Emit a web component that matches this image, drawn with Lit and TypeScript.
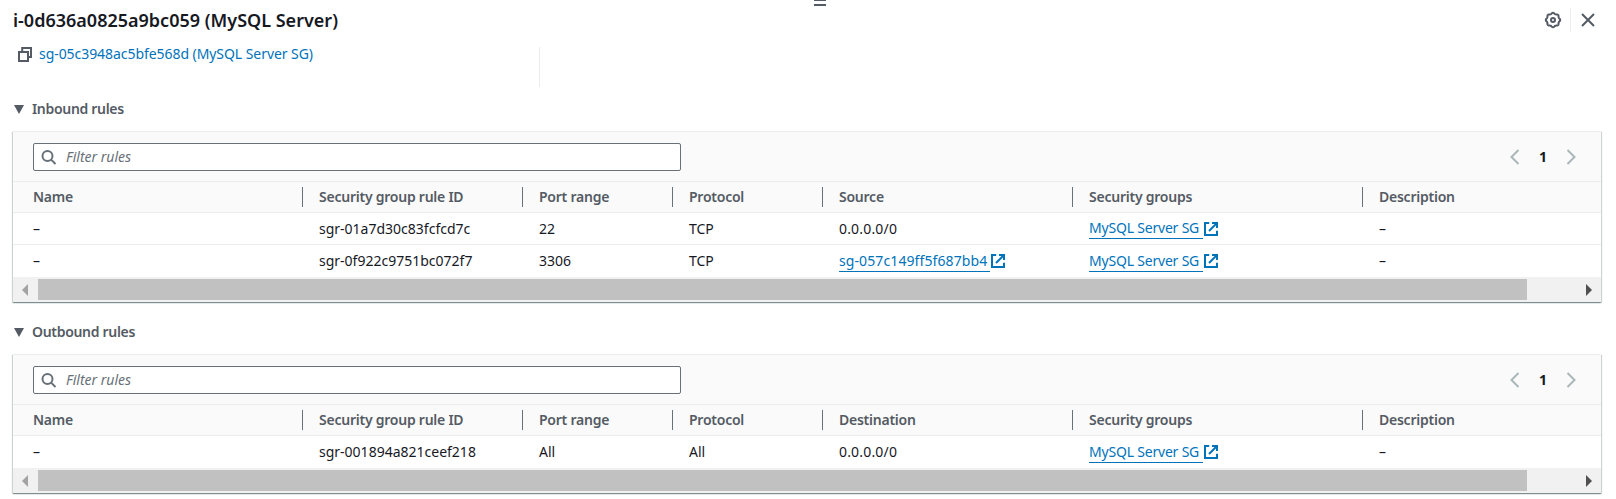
import { LitElement, html, css, svg } from 'lit';
import { customElement, property } from 'lit/decorators.js';

interface Rule {
  id: string;
  port: string;
  protocol: string;
  peer: string;
  peerIsLink?: boolean;
  group: string;
}

const inbound: Rule[] = [
  { id: 'sgr-01a7d30c83fcfcd7c', port: '22', protocol: 'TCP', peer: '0.0.0.0/0', group: 'MySQL Server SG' },
  { id: 'sgr-0f922c9751bc072f7', port: '3306', protocol: 'TCP', peer: 'sg-057c149ff5f687bb4', peerIsLink: true, group: 'MySQL Server SG' },
];

const outbound: Rule[] = [
  { id: 'sgr-001894a821ceef218', port: 'All', protocol: 'All', peer: '0.0.0.0/0', group: 'MySQL Server SG' },
];

const gearOutline = (() => {
  const points: string[] = [];
  for (let i = 0; i < 96; i++) {
    const a = (i / 96) * Math.PI * 2;
    const r = 6.7 + 0.5 * Math.cos(a * 8);
    points.push(`${(8 + r * Math.cos(a)).toFixed(2)} ${(8 + r * Math.sin(a)).toFixed(2)}`);
  }
  return `M${points.join('L')}Z`;
})();

const icons = {
  copy: svg`<path d="M2 6h9v8.9H2z"/><path d="M5.2 6V2H14v9h-3"/>`,
  gear: svg`<path d=${gearOutline}/><circle cx="8" cy="8" r="2"/>`,
  close: svg`<path d="M2 2l12 12M14 2L2 14"/>`,
  search: svg`<circle cx="6.5" cy="7" r="5"/><path d="M10.1 10.6L14.5 15"/>`,
  prev: svg`<path d="M11.5 1L4.5 8l7 7"/>`,
  next: svg`<path d="M4.5 1l7 7-7 7"/>`,
  external: svg`<path d="M6.2 2H2v12h12V9.8"/><path d="M9 2h5v5"/><path d="M6 10l8-8"/>`,
};

@customElement('ui-icon')
export class UiIcon extends LitElement {
  @property() name: keyof typeof icons = 'close';

  static styles = css`
    :host { display: block; width: 16px; height: 16px; flex: none; }
    .glyph { display: block; width: 16px; height: 16px; fill: none; stroke: currentColor; stroke-width: 2; overflow: visible; }
  `;

  render() {
    return html`<svg class="glyph" viewBox="0 0 16 16">${icons[this.name]}</svg>`;
  }
}

@customElement('rules-section')
export class RulesSection extends LitElement {
  @property() heading = '';
  @property() peerLabel = '';
  @property({ attribute: false }) rules: Rule[] = [];

  static styles = css`
    :host { display: block; }
    .heading {
      display: flex; align-items: center; height: 20px; margin: 0 0 12px 1px;
      font-size: 14px; font-weight: 600; letter-spacing: -0.31px; color: #545b64;
    }
    .caret { width: 10px; height: 9px; margin-right: 8px; fill: #545b64; }
    .panel {
      border-top: 1px solid #eaeded; background: #fff;
      box-shadow: 0 1px 1px 0 rgba(0,28,36,.3), 1px 1px 1px 0 rgba(0,28,36,.15), -1px 1px 1px 0 rgba(0,28,36,.15);
    }
    .toolbar {
      display: flex; justify-content: space-between; align-items: flex-start;
      height: 49px; box-sizing: border-box; padding: 11px 22px 0 20px; background: #fafafa;
    }
    .filter {
      display: flex; align-items: center; width: 648px; height: 28px; box-sizing: border-box;
      padding-left: 7px; border: 1px solid #687078; border-radius: 2px; background: #fff; color: #687078;
    }
    .hint { margin-left: 9px; font-style: italic; }
    .pager { display: flex; align-items: center; height: 28px; color: #aab7b8; }
    .page { width: 40px; text-align: center; font-weight: 700; color: #16191f; }
    .row {
      display: grid; grid-template-columns: 290px 220px 150px 150px 250px 290px 1fr;
      align-items: center; height: 31px; border-bottom: 1px solid #eaeded;
    }
    .row.last { height: 32px; border-bottom: none; }
    .row.head {
      height: 30px; border-top: 1px solid #eaeded; background: #fafafa;
      font-weight: 600; letter-spacing: -0.24px; color: #545b64;
    }
    .cell { display: flex; align-items: center; padding-left: 16px; white-space: nowrap; }
    .cell:first-child { padding-left: 20px; }
    .head .cell { height: 20px; border-right: 1px solid #687078; }
    .head .cell:last-child { border-right: none; }
    .ip { letter-spacing: 0.18px; }
    .link { display: flex; align-items: center; color: #0073bb; }
    .label { height: 20px; line-height: 20px; padding-right: 4px; border-bottom: 1px solid #0073bb; letter-spacing: -0.2px; }
    .label.wide { letter-spacing: 0.1px; padding-right: 3px; }
    .scroll { display: flex; align-items: center; height: 25px; background: #f1f1f1; }
    .arrow { width: 6px; height: 12px; flex: none; }
    .back { margin: 0 10px 0 9px; fill: #a3a3a3; }
    .forward { margin: 0 9px 0 auto; fill: #505050; }
    .thumb { width: 1489px; height: 21px; background: #c1c1c1; }
  `;

  private link(text: string, wide = false) {
    return html`<a class="link"><span class="label ${wide ? 'wide' : ''}">${text}</span><ui-icon name="external"></ui-icon></a>`;
  }

  render() {
    const titles = ['Name', 'Security group rule ID', 'Port range', 'Protocol', this.peerLabel, 'Security groups', 'Description'];
    return html`
      <div class="heading">
        <svg class="caret" viewBox="0 0 10 9"><path d="M0 0h10L5 9z"/></svg>${this.heading}
      </div>
      <div class="panel">
        <div class="toolbar">
          <div class="filter"><ui-icon name="search"></ui-icon><span class="hint">Filter rules</span></div>
          <div class="pager"><ui-icon name="prev"></ui-icon><span class="page">1</span><ui-icon name="next"></ui-icon></div>
        </div>
        <div class="row head">${titles.map((t) => html`<div class="cell">${t}</div>`)}</div>
        ${this.rules.map((r, i) => html`
          <div class="row ${i === this.rules.length - 1 ? 'last' : ''}">
            <div class="cell">–</div>
            <div class="cell">${r.id}</div>
            <div class="cell">${r.port}</div>
            <div class="cell">${r.protocol}</div>
            <div class="cell ip">${r.peerIsLink ? this.link(r.peer, true) : r.peer}</div>
            <div class="cell">${this.link(r.group)}</div>
            <div class="cell">–</div>
          </div>`)}
        <div class="scroll">
          <svg class="arrow back" viewBox="0 0 6 12"><path d="M6 0v12L0 6z"/></svg>
          <div class="thumb"></div>
          <svg class="arrow forward" viewBox="0 0 6 12"><path d="M0 0v12l6-6z"/></svg>
        </div>
      </div>`;
  }
}

@customElement('app-root')
export class AppRoot extends LitElement {
  static styles = css`
    :host {
      display: block; position: relative; height: 499px; box-sizing: border-box; padding: 8px 15px 0 13px;
      overflow: hidden; background: #fff; color: #16191f;
      font-family: "Noto Sans", "Open Sans", sans-serif; font-size: 14px; line-height: 20px;
    }
    .grip { position: absolute; top: 0; left: 814px; width: 12px; height: 3px; border-top: 1px solid #545b64; border-bottom: 2px solid #545b64; }
    .top { display: flex; align-items: center; height: 24px; }
    .title { flex: 1; font-size: 18px; font-weight: 600; line-height: 24px; }
    .tools { display: flex; align-items: center; height: 24px; color: #545b64; }
    .close { margin-left: 9px; padding: 4px 5px 4px 9px; border-left: 1px solid #eaeded; }
    .summary { display: flex; height: 40px; margin-top: 15px; }
    .group { display: flex; width: 526px; height: 14px; align-items: center; padding-left: 4px; box-sizing: border-box; color: #545b64; }
    .group-link { margin-left: 6px; letter-spacing: -0.06px; color: #0073bb; }
    .rule { width: 1px; background: #eaeded; }
    .inbound { margin-top: 12px; }
    .outbound { margin-top: 20px; }
  `;

  render() {
    return html`
      <div class="grip"></div>
      <header class="top">
        <div class="title">i-0d636a0825a9bc059 (MySQL Server)</div>
        <div class="tools">
          <ui-icon name="gear"></ui-icon>
          <div class="close"><ui-icon name="close"></ui-icon></div>
        </div>
      </header>
      <div class="summary">
        <div class="group"><ui-icon name="copy"></ui-icon><a class="group-link">sg-05c3948ac5bfe568d (MySQL Server SG)</a></div>
        <div class="rule"></div>
      </div>
      <rules-section class="inbound" heading="Inbound rules" peerLabel="Source" .rules=${inbound}></rules-section>
      <rules-section class="outbound" heading="Outbound rules" peerLabel="Destination" .rules=${outbound}></rules-section>`;
  }
}
